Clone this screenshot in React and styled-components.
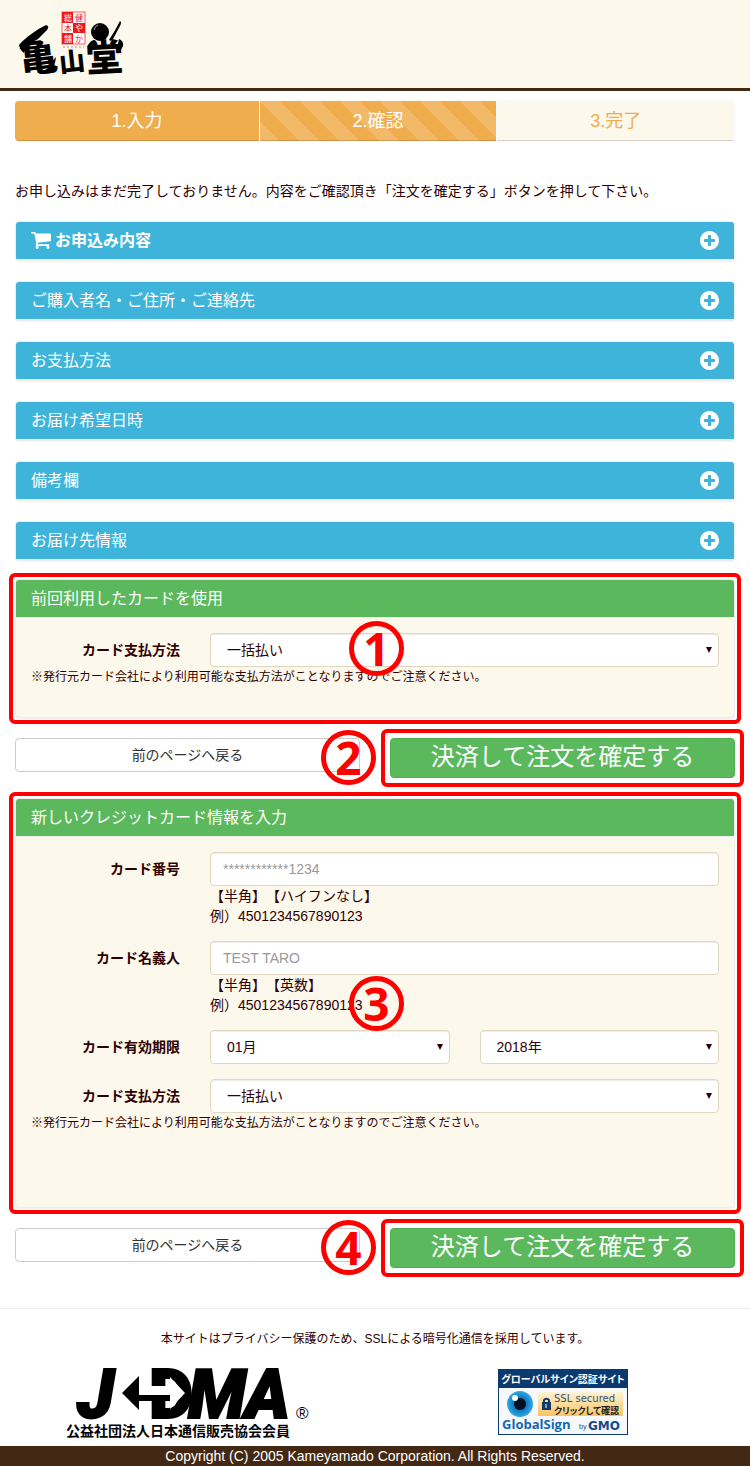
import styled, { createGlobalStyle } from "styled-components";

const sections = [
  { title: "お申込み内容", cart: true },
  { title: "ご購入者名・ご住所・ご連絡先" },
  { title: "お支払方法" },
  { title: "お届け希望日時" },
  { title: "備考欄" },
  { title: "お届け先情報" },
];

const jpFont = '"Noto Sans CJK JP", sans-serif';

const CartIcon = () => (
  <svg width="20" height="17" viewBox="64 256 1664 1408" fill="currentColor" aria-hidden="true">
    <path d="M704 1536q0 52-38 90t-90 38-90-38-38-90 38-90 90-38 90 38 38 90zm896 0q0 52-38 90t-90 38-90-38-38-90 38-90 90-38 90 38 38 90zm128-1088v512q0 24-16.500 42.500t-40.500 21.500l-1044 122q13 60 13 70 0 16-24 64h920q26 0 45 19t19 45-19 45-45 19h-1024q-26 0-45-19t-19-45q0-11 8-31.500t16-36 21.500-40 15.500-29.500l-177-823h-204q-26 0-45-19t-19-45 19-45 45-19h256q16 0 28.500 6.500t19.500 15.500 13 24.500 8 26 5.500 29.500 4.500 26h1201q26 0 45 19t19 45z" />
  </svg>
);

const PlusIcon = () => (
  <svg width="19" height="19" viewBox="128 128 1536 1536" fill="currentColor" aria-hidden="true">
    <path d="M1344 960v-128q0-26-19-45t-45-19h-256v-256q0-26-19-45t-45-19h-128q-26 0-45 19t-19 45v256h-256q-26 0-45 19t-19 45v128q0 26 19 45t45 19h256v256q0 26 19 45t45 19h128q26 0 45-19t19-45v-256h256q26 0 45-19t19-45zm320-64q0 209-103 385.500t-279.500 279.500-385.500 103-385.500-103-279.500-279.500-103-385.500 103-385.500 279.500-279.500 385.500-103 385.500 103 279.500 279.500 103 385.500z" />
  </svg>
);

const ShopLogo = () => (
  <svg width="108" height="68" viewBox="0 0 108 68" overflow="visible" role="img" aria-label="亀山堂">
    <g fontFamily={jpFont} fontWeight="900" fill="#000">
      <text x="0" y="60" fontSize="38" transform="rotate(-7 20 45)">亀</text>
      <text x="40" y="60" fontSize="26" transform="rotate(-6 53 50)">山</text>
      <text x="67" y="60" fontSize="37" transform="rotate(-3 86 45)">堂</text>
    </g>
    {/* brush strokes around the characters */}
    <path d="M0 34C7 26 17 19 27 14q4 1 1 5L19 28 10 33Q5 38 5 42 1 39 0 34z" />
    <path d="M37 46q-1 9-5 16-8 2-14-1 8 0 13-6 3-6 6-9z" />
    <circle cx="81" cy="21" r="9" />
    <path d="M101 10q2 1 0 5l-7 13q-2 3-4 1 6-9 11-19z" />
    <path d="M100 28q5 2 4 7-2 5-6 7 0-7 2-14z" />
    <path d="M69 34q3-5 7-5l-3 11q-5 2-4-6z" />
    <path d="M75 19q1-4 4-5" fill="none" stroke="#aaa" />
    <rect x="43" y="1" width="23" height="32" fill="#fff" stroke="#f55" />
    <path fill="#f01818" d="M43 1h11v11h-11zM54 12h12v10h-12zM43 22h11v11h-11z" />
    <g fontFamily={jpFont} fontSize="8" textAnchor="middle">
      <text x="49" y="10" fill="#fff">総</text>
      <text x="60" y="10" fill="#f01818">健</text>
      <text x="49" y="20" fill="#f01818">本</text>
      <text x="60" y="20" fill="#fff">や</text>
      <text x="49" y="31" fill="#fff">舗</text>
      <text x="60" y="31" fill="#f01818">か</text>
    </g>
    <path d="M44 36h21" stroke="#999" strokeDasharray="2 2" />
  </svg>
);

const JdmaLogo = () => (
  <svg width="244" height="68" viewBox="0 0 244 68" overflow="visible" role="img" aria-label="JDMA 公益社団法人日本通信販売協会会員">
    <g fontFamily="Roboto, sans-serif" fontSize="68" fontWeight="900" fontStyle="italic" stroke="#000" strokeWidth="2">
      <text x="11" y="49">J</text>
      <text x="83" y="49" fontStyle="normal">D</text>
      <text x="122" y="49">M</text>
      <text x="179" y="49">A</text>
    </g>
    <path d="M74 17h30V8l15 16-15 16v-8H74z" fill="#fff" />
    <path d="M56 24L73 7v19h31v6H73v9z" />
    <text x="0" y="67" fontFamily={jpFont} fontSize="14" fontWeight="700">
      公益社団法人日本通信販売協会会員
    </text>
    <text x="230" y="50" fontFamily="Liberation Sans, sans-serif" fontSize="17">®</text>
  </svg>
);

const GlobalSignSeal = () => (
  <svg width="130" height="66" viewBox="0 0 130 66" role="img" aria-label="GlobalSign SSL secured">
    <defs>
      <linearGradient id="gold" x1="0" y1="0" x2="0" y2="1">
        <stop offset="0" stopColor="#fff3d8" />
        <stop offset="1" stopColor="#fac463" />
      </linearGradient>
      <radialGradient id="iris">
        <stop offset="0.4" stopColor="#0873b8" />
        <stop offset="1" stopColor="#30a7e6" />
      </radialGradient>
    </defs>
    <rect x="0.5" y="0.5" width="129" height="65" fill="#f6f8fb" stroke="#0b3a6f" />
    <rect width="130" height="19" fill="#0b3a6f" />
    <text
      x="65"
      y="14"
      fill="#fff"
      fontFamily={jpFont}
      fontSize="10"
      fontWeight="700"
      textAnchor="middle"
      style={{ fontFeatureSettings: '"palt"' }}
    >
      グローバルサイン認証サイト
    </text>
    <circle cx="22" cy="35" r="13" fill="url(#iris)" />
    <circle cx="22" cy="35" r="6" fill="#04101f" />
    <circle cx="17" cy="29" r="3" fill="#fff" />
    <rect x="40" y="23" width="85" height="24" fill="url(#gold)" />
    <path d="M46 33v-2a3 3 0 0 1 5 0v2" fill="none" stroke="#123a66" strokeWidth="2" />
    <rect x="44" y="33" width="9" height="8" fill="#123a66" />
    <path d="M48 35v4" stroke="#fff" />
    <text x="56" y="33" fill="#31536f" fontFamily="DejaVu Sans, sans-serif" fontSize="10">SSL secured</text>
    <text x="56" y="45" fill="#222" fontFamily={jpFont} fontSize="9" fontWeight="700" style={{ fontFeatureSettings: '"palt"' }}>
      クリックして確認
    </text>
    <text x="4" y="60" fill="#1268b3" fontFamily="Open Sans, sans-serif" fontSize="13" fontWeight="700">GlobalSign</text>
    <text x="81" y="60" fill="#174a8c" fontFamily="Liberation Sans, sans-serif" fontSize="7">by</text>
    <text x="90" y="61" fill="#174a8c" fontFamily="DejaVu Sans, sans-serif" fontSize="12" fontWeight="700">GMO</text>
  </svg>
);

const SelectBox = ({ id, label, options }) => (
  <SelectWrap>
    <Select id={id} aria-label={label}>
      {options.map((option) => (
        <option key={option}>{option}</option>
      ))}
    </Select>
  </SelectWrap>
);

const PaymentField = ({ id }) => (
  <div>
    <Row>
      <Label htmlFor={id}>カード支払方法</Label>
      <SelectBox id={id} options={["一括払い"]} />
    </Row>
    <Note>※発行元カード会社により利用可能な支払方法がことなりますのでご注意ください。</Note>
  </div>
);

const Actions = ({ number }) => (
  <ActionRow>
    <BackButton type="button">前のページへ戻る</BackButton>
    <ConfirmWrap>
      <ConfirmButton type="submit">決済して注文を確定する</ConfirmButton>
      <Frame $gap={9} />
      <ActionNumber>{number}</ActionNumber>
    </ConfirmWrap>
  </ActionRow>
);

const App = () => {
  return (
    <>
      <GlobalStyle />
      <Header>
        <a href="#top">
          <ShopLogo />
        </a>
      </Header>
      <Main>
        <Steps>
          <Step $width={34}>1.入力</Step>
          <Step $width={33} $active>
            2.確認
          </Step>
          <Step $width={33} $pending>
            3.完了
          </Step>
        </Steps>
        <Lead>
          お申し込みはまだ完了しておりません。内容をご確認頂き「注文を確定する」ボタンを押して下さい。
        </Lead>
        <Sections>
          {sections.map(({ title, cart }) => (
            <Panel key={title}>
              <Toggle type="button" $bold={cart}>
                {cart && <CartIcon />}
                <span>{title}</span>
                <PlusIcon />
              </Toggle>
            </Panel>
          ))}
        </Sections>

        <form onSubmit={(e) => e.preventDefault()}>
          <Panel>
            <Heading>前回利用したカードを使用</Heading>
            <Body>
              <PaymentField id="saved-payment" />
            </Body>
            <Frame $gap={7} />
            <PanelNumber $top={41}>1</PanelNumber>
          </Panel>
          <Actions number="2" />
        </form>

        <form onSubmit={(e) => e.preventDefault()}>
          <Panel>
            <Heading>新しいクレジットカード情報を入力</Heading>
            <Body $tall>
              <Row>
                <Label htmlFor="card-number">カード番号</Label>
                <div>
                  <Input id="card-number" placeholder="************1234" />
                  <Help>【半角】【ハイフンなし】</Help>
                  <Help>例）4501234567890123</Help>
                </div>
              </Row>
              <Row>
                <Label htmlFor="card-name">カード名義人</Label>
                <div>
                  <Input id="card-name" placeholder="TEST TARO" />
                  <Help>【半角】【英数】</Help>
                  <Help>例）4501234567890123</Help>
                </div>
              </Row>
              <Row>
                <Label htmlFor="card-month">カード有効期限</Label>
                <Pair>
                  <SelectBox id="card-month" options={["01月"]} />
                  <SelectBox id="card-year" label="年" options={["2018年"]} />
                </Pair>
              </Row>
              <PaymentField id="new-payment" />
            </Body>
            <Frame $gap={7} />
            <PanelNumber $top={177}>3</PanelNumber>
          </Panel>
          <Actions number="4" />
        </form>
      </Main>
      <Footer>
        <p>本サイトはプライバシー保護のため、SSLによる暗号化通信を採用しています。</p>
        <div className="logos">
          <a href="#jdma">
            <JdmaLogo />
          </a>
          <a href="#globalsign">
            <GlobalSignSeal />
          </a>
        </div>
        <small>Copyright (C) 2005 Kameyamado Corporation. All Rights Reserved.</small>
      </Footer>
    </>
  );
};

const GlobalStyle = createGlobalStyle`
  * {
    box-sizing: border-box;
  }
  body {
    margin: 0;
    background: #fff;
    color: #300000;
    font-family: "Liberation Sans", "Noto Sans CJK JP", sans-serif;
    font-size: 14px;
    line-height: 20px;
    text-spacing-trim: space-all;
  }
  p, h2 {
    margin: 0;
  }
  button, input, select {
    font-family: inherit;
    font-size: 14px;
    color: inherit;
  }
  svg {
    display: block;
    flex: none;
  }
`;

const Header = styled.header`
  display: flex;
  padding: 11px 19px 9px;
  background: #fdf8ec;
  border-bottom: 3px solid #432813;
`;

const Main = styled.main`
  padding: 10px 15px 0;
`;

const Steps = styled.div`
  display: flex;
  overflow: hidden;
  border-radius: 4px;
  box-shadow: 0 0 1px rgba(0, 0, 0, 0.2);
`;

const Step = styled.div`
  width: ${(p) => p.$width}%;
  height: 40px;
  border-right: 1px solid #fff;
  line-height: 40px;
  text-align: center;
  font-size: 18px;
  color: ${(p) => (p.$pending ? "#f0ad4e" : "#fff")};
  background-color: ${(p) => (p.$pending ? "#fdf8ec" : "#f0ad4e")};
  background-image: ${(p) =>
    p.$active
      ? `linear-gradient(45deg, rgba(255, 255, 255, 0.15) 25%, transparent 25%,
         transparent 50%, rgba(255, 255, 255, 0.15) 50%, rgba(255, 255, 255, 0.15) 75%,
         transparent 75%, transparent)`
      : "none"};
  background-size: 40px 40px;
  box-shadow: inset 0 -1px 0 rgba(0, 0, 0, 0.15);
`;

const Lead = styled.p`
  margin: 40px 0 20px;
`;

const Sections = styled.div`
  display: grid;
  gap: 20px;
  margin-bottom: 18px;
`;

const Panel = styled.section`
  position: relative;
  border: 1px solid #eee;
  border-radius: 4px;
  background: #fdf8ec;
  box-shadow: 0 1px 1px rgba(0, 0, 0, 0.05);
`;

const Toggle = styled.button`
  display: flex;
  align-items: center;
  gap: 4px;
  width: 100%;
  height: 38px;
  padding: 0 15px;
  border: 0;
  border-bottom: 1px solid #eee;
  border-radius: 3px 3px 0 0;
  background: #3eb4da;
  color: #fff;
  font-size: 16px;
  font-weight: ${(p) => (p.$bold ? 700 : 400)};
  line-height: 20px;
  text-align: left;
  cursor: pointer;
  span {
    flex: 1;
  }
`;

const Heading = styled.h2`
  height: 38px;
  padding: 0 15px;
  border-bottom: 1px solid #eee;
  border-radius: 3px 3px 0 0;
  background: #5cb85c;
  color: #fff;
  font-size: 16px;
  font-weight: 400;
  line-height: 37px;
`;

const Body = styled.div`
  display: grid;
  gap: 15px;
  padding: 15px 15px ${(p) => (p.$tall ? 74 : 30)}px;
`;

const Row = styled.div`
  display: grid;
  grid-template-columns: 179px 1fr;
`;

const Label = styled.label`
  padding-right: 30px;
  line-height: 34px;
  font-weight: 700;
  text-align: right;
  white-space: nowrap;
`;

const Input = styled.input`
  display: block;
  width: 100%;
  height: 34px;
  padding: 0 12px;
  border: 1px solid #e2d6c0;
  border-radius: 4px;
  background: #fff;
  box-shadow: inset 0 1px 1px rgba(0, 0, 0, 0.075);
  &::placeholder {
    color: #999;
    opacity: 1;
  }
`;

const SelectWrap = styled.div`
  position: relative;
  &::after {
    content: "";
    position: absolute;
    top: 14px;
    right: 7px;
    border: 3px solid transparent;
    border-top: 6px solid #300000;
    border-bottom: 0;
    pointer-events: none;
  }
`;

const Select = styled(Input).attrs({ as: "select" })`
  padding: 0 16px;
  appearance: none;
`;

const Pair = styled.div`
  display: grid;
  grid-template-columns: 1fr 1fr;
  gap: 30px;
`;

const Help = styled.p`
  line-height: 20px;
`;

const Note = styled.p`
  font-size: 12px;
  line-height: 20px;
`;

const ActionRow = styled.div`
  display: grid;
  grid-template-columns: 1fr 1fr;
  align-items: start;
  gap: 30px;
  margin: 20px 0;
`;

const BackButton = styled.button`
  height: 34px;
  padding: 0 12px 2px;
  border: 1px solid #ccc;
  border-radius: 4px;
  background: #fff;
  color: #333;
`;

const ConfirmWrap = styled.div`
  position: relative;
`;

const ConfirmButton = styled.button`
  display: block;
  width: 100%;
  height: 40px;
  padding: 0 0 2px;
  border: 1px solid #4cae4c;
  border-radius: 4px;
  background: #5cb85c;
  color: #fff;
  font-size: 24px;
  line-height: 36px;
`;

/* red guide marks laid over the form */
const Frame = styled.div`
  position: absolute;
  inset: -${(p) => p.$gap}px;
  border: 4px solid #f00;
  border-radius: 6px;
  pointer-events: none;
`;

const NumberMark = styled.span`
  position: absolute;
  display: grid;
  place-items: center;
  width: 55px;
  height: 55px;
  border: 5px solid #f00;
  border-radius: 50%;
  color: #f00;
  font-family: "Open Sans", sans-serif;
  font-size: 46px;
  font-weight: 700;
  line-height: 45px;
  pointer-events: none;
`;

const PanelNumber = styled(NumberMark)`
  top: ${(p) => p.$top}px;
  left: calc(50% - 26px);
`;

const ActionNumber = styled(NumberMark)`
  top: -8px;
  right: calc(100% + 14px);
`;

const Footer = styled.footer`
  margin-top: 40px;
  border-top: 1px solid #eee;
  text-align: center;
  p {
    margin: 20px 0;
    font-size: 12px;
  }
  .logos {
    display: grid;
    grid-template-columns: 1fr 1fr;
    justify-items: center;
    margin-bottom: 9px;
  }
  small {
    display: block;
    background: #432813;
    color: #fff;
    font-size: 14px;
  }
`;

export default App;
